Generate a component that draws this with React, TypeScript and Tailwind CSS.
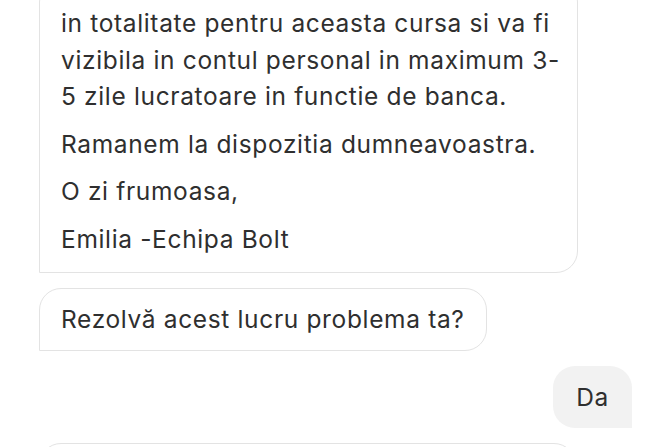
import React from 'react';

const font = { fontFamily: 'Inter, "Noto Sans", sans-serif' };

const agentLines = [
  ['in totalitate pentru aceasta cursa si va fi', 'vizibila in contul personal in maximum 3-', '5 zile lucratoare in functie de banca.'],
  ['Ramanem la dispozitia dumneavoastra.'],
  ['O zi frumoasa,'],
  ['Emilia -Echipa Bolt'],
];

export default function App() {
  return (
    <div className="h-[447px] w-[670px] overflow-hidden bg-white text-[#2f2f2f]" style={font}>
      <div className="flex flex-col gap-[15px] px-[39px] pr-[38px] text-[24.5px] leading-[36.5px] tracking-[0.65px]">
        {/* Mesaj agent (partea de sus taiata) */}
        <div className="-mt-[20px] w-[539px] rounded-[22px] rounded-bl-none border border-[#e3e3e3] px-[21px] pt-[24px] pb-[15px]">
          {agentLines.map((para, i) => (
            <p key={i} className={i > 0 ? 'mt-[11px]' : ''}>
              {para.map((l) => (
                <span key={l} className="block whitespace-nowrap">
                  {l}
                </span>
              ))}
            </p>
          ))}
        </div>

        <div className="self-start rounded-[22px] rounded-bl-none border border-[#e3e3e3] px-[21px] py-[12px]">
          Rezolvă acest lucru problema ta?
        </div>

        <div className="self-end rounded-[22px] rounded-br-none bg-[#f2f2f2] px-[23px] py-[13px]">
          Da
        </div>

        <div className="h-[60px] w-[537px] rounded-[22px] rounded-bl-none border border-[#e3e3e3]" />
      </div>
    </div>
  );
}
